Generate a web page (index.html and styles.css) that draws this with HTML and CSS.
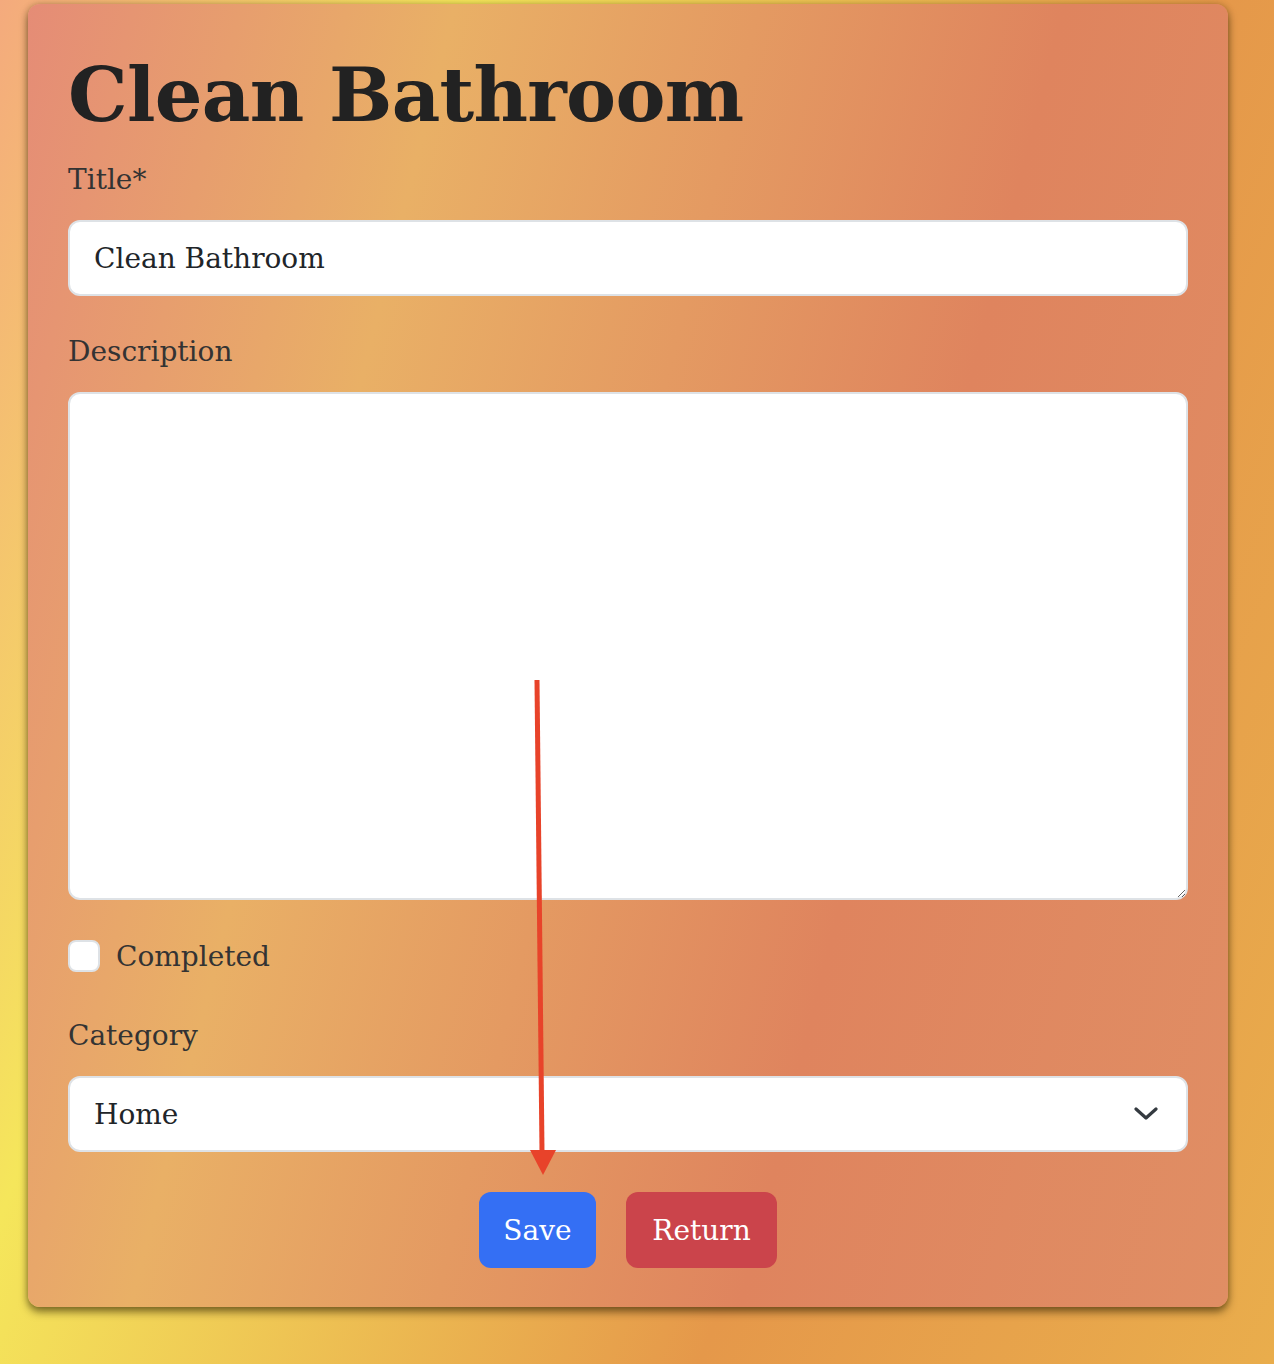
FILE: index.html
```html
<!DOCTYPE html>
<html lang="en">
<head>
<meta charset="utf-8">
<title>Clean Bathroom</title>
<link rel="stylesheet" href="styles.css">
</head>
<body>
<main class="card">
  <h1 class="title">Clean Bathroom</h1>
  <form class="form">
    <label class="label" for="title">Title*</label>
    <input class="field" id="title" type="text" value="Clean Bathroom">

    <label class="label gap-top" for="desc">Description</label>
    <textarea class="field area" id="desc"></textarea>

    <div class="check-row">
      <span class="checkbox"></span>
      <span class="check-label">Completed</span>
    </div>

    <label class="label gap-top" for="cat">Category</label>
    <div class="select-wrap">
      <div class="field select" id="cat">Home</div>
      <svg class="chevron" width="24" height="14" viewBox="0 0 24 14"><path d="M2 2 L12 11 L22 2" fill="none" stroke="#343a40" stroke-width="3.2" stroke-linecap="round" stroke-linejoin="round"/></svg>
    </div>

    <div class="actions">
      <button type="button" class="btn btn-save">Save</button>
      <button type="button" class="btn btn-return">Return</button>
    </div>
  </form>
</main>
<svg class="annotation" width="1274" height="1364" viewBox="0 0 1274 1364">
  <line x1="537" y1="680" x2="542" y2="1152" stroke="#e8432a" stroke-width="5"/>
  <polygon points="530,1150 556,1150 543,1175" fill="#e8432a"/>
</svg>
</body>
</html>
```

FILE: styles.css
```css
* { box-sizing: border-box; }

html, body {
  margin: 0;
  padding: 0;
}

body {
  width: 1274px;
  height: 1364px;
  overflow: hidden;
  position: relative;
  font-family: "DejaVu Serif", Georgia, serif;
  color: #212529;
  background: linear-gradient(111deg, #f4aa7d 0%, #f5e65b 26%, #e5984a 68%, #e9ad4c 100%);
  padding-top: 4px;
}

.card {
  margin-left: 28px;
  width: 1200px;
  height: 1303px;
  border-radius: 12px;
  padding: 40px 40px;
  background: linear-gradient(104deg, #e58c76 0%, #e9b066 28%, #df845e 68%, #e08e64 100%);
  box-shadow: 0 5px 9px rgba(40, 30, 0, 0.55), 0 0 6px rgba(60, 40, 0, 0.25);
}

.title {
  margin: 6px 0 16px;
  font-size: 75px;
  line-height: 90px;
  font-weight: 700;
  color: #222;
  letter-spacing: -0.7px;
}

.form {
  display: flex;
  flex-direction: column;
}

.label {
  font-size: 28px;
  line-height: 48px;
  color: #333;
  margin-bottom: 16px;
}

.gap-top {
  margin-top: 32px;
}

.field {
  width: 1120px;
  height: 76px;
  border: 2px solid #dee2e6;
  border-radius: 12px;
  background: #fff;
  padding: 0 24px;
  font-family: "DejaVu Serif", Georgia, serif;
  font-size: 28px;
  color: #212529;
  outline: none;
}

.area {
  height: 508px;
  resize: vertical;
  padding: 12px 24px;
}

.check-row {
  display: flex;
  align-items: center;
  gap: 16px;
  height: 48px;
  margin-top: 32px;
}

.checkbox {
  width: 32px;
  height: 32px;
  background: #fff;
  border: 2px solid #dee2e6;
  border-radius: 8px;
}

.check-label {
  font-size: 28px;
  color: #333;
}

.select-wrap {
  position: relative;
}

.select {
  display: flex;
  align-items: center;
}

.chevron {
  position: absolute;
  right: 30px;
  top: 31px;
}

.actions {
  display: flex;
  justify-content: center;
  gap: 30px;
  margin-top: 40px;
}

.btn {
  height: 76px;
  padding: 0 22px;
  border: none;
  border-radius: 12px;
  color: #fff;
  font-family: "DejaVu Serif", Georgia, serif;
  font-size: 28px;
}

.btn-save {
  width: 117px;
  background: #346ff4;
}

.btn-return {
  width: 151px;
  background: #cb444b;
}

.annotation {
  position: absolute;
  left: 0;
  top: 0;
  pointer-events: none;
}
```
